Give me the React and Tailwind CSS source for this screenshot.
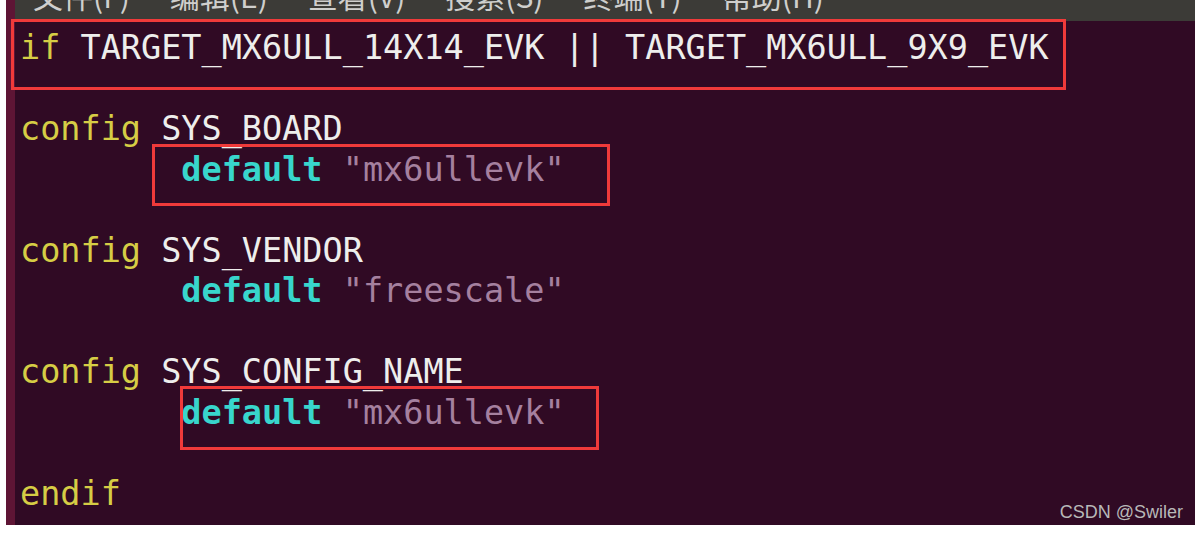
import React from 'react';

const mono = "font-['DejaVu_Sans_Mono','Liberation_Mono',monospace] text-[33.5px]";

const KW = ({ children }) => <span className="text-[#d6cd45]">{children}</span>;
const ID = ({ children }) => <span className="text-[#eeeeec]">{children}</span>;
const DEF = ({ children }) => <span className="text-[#38d6cc] font-bold">{children}</span>;
const STR = ({ children }) => <span className="text-[#a5809f]">{children}</span>;

// red annotation rectangle drawn over a line
const Mark = ({ className }) => (
    <div className={`absolute border-[3px] border-[#f03a3a] pointer-events-none ${className}`} />
);

const Line = ({ children, mark }) => (
    <div className="relative h-[40.5px] leading-[40.5px] whitespace-pre pl-[5px]">
        {children}
        {mark}
    </div>
);

const menus = ['文件(F)', '编辑(E)', '查看(V)', '搜索(S)', '终端(T)', '帮助(H)'];

const App = () => {
    return (
        <div className="w-[1200px] h-[533px] bg-white overflow-hidden">
            <div className="ml-[6px] w-[1189px] h-[525px] flex bg-[#300a24] relative">
                <div className="w-[9px] shrink-0 bg-[#5e1535]" />
                <div className="flex-1 flex flex-col">
                    <div className="h-[21px] bg-[#3c3b37] overflow-hidden flex gap-[40px] pl-[18px]">
                        {menus.map((m) => (
                            <span
                                key={m}
                                className="mt-[-20px] text-[30px] leading-[30px] text-[#cfcfcd] font-['Noto_Sans_CJK_SC',sans-serif] whitespace-nowrap"
                            >
                                {m}
                            </span>
                        ))}
                    </div>
                    <div className={`pt-[7px] ${mono}`}>
                        <Line mark={<Mark className="left-[-4px] top-[-9px] w-[1055px] h-[71px]" />}>
                            <KW>if</KW> <ID>TARGET_MX6ULL_14X14_EVK || TARGET_MX6ULL_9X9_EVK</ID>
                        </Line>
                        <Line />
                        <Line>
                            <KW>config</KW> <ID>SYS_BOARD</ID>
                        </Line>
                        <Line mark={<Mark className="left-[137px] top-[-6px] w-[458px] h-[62px]" />}>
                            {'        '}<DEF>default</DEF> <STR>"mx6ullevk"</STR>
                        </Line>
                        <Line />
                        <Line>
                            <KW>config</KW> <ID>SYS_VENDOR</ID>
                        </Line>
                        <Line>
                            {'        '}<DEF>default</DEF> <STR>"freescale"</STR>
                        </Line>
                        <Line />
                        <Line>
                            <KW>config</KW> <ID>SYS_CONFIG_NAME</ID>
                        </Line>
                        <Line mark={<Mark className="left-[165px] top-[-7px] w-[419px] h-[64px]" />}>
                            {'        '}<DEF>default</DEF> <STR>"mx6ullevk"</STR>
                        </Line>
                        <Line />
                        <Line>
                            <KW>endif</KW>
                        </Line>
                    </div>
                </div>
                {/* watermark */}
                <span className="absolute right-[12px] bottom-[4px] text-[18px] leading-[18px] text-[#b8b8b8] font-['Liberation_Sans',Arial,sans-serif]">
                    CSDN @Swiler
                </span>
            </div>
        </div>
    );
};

export default App;
